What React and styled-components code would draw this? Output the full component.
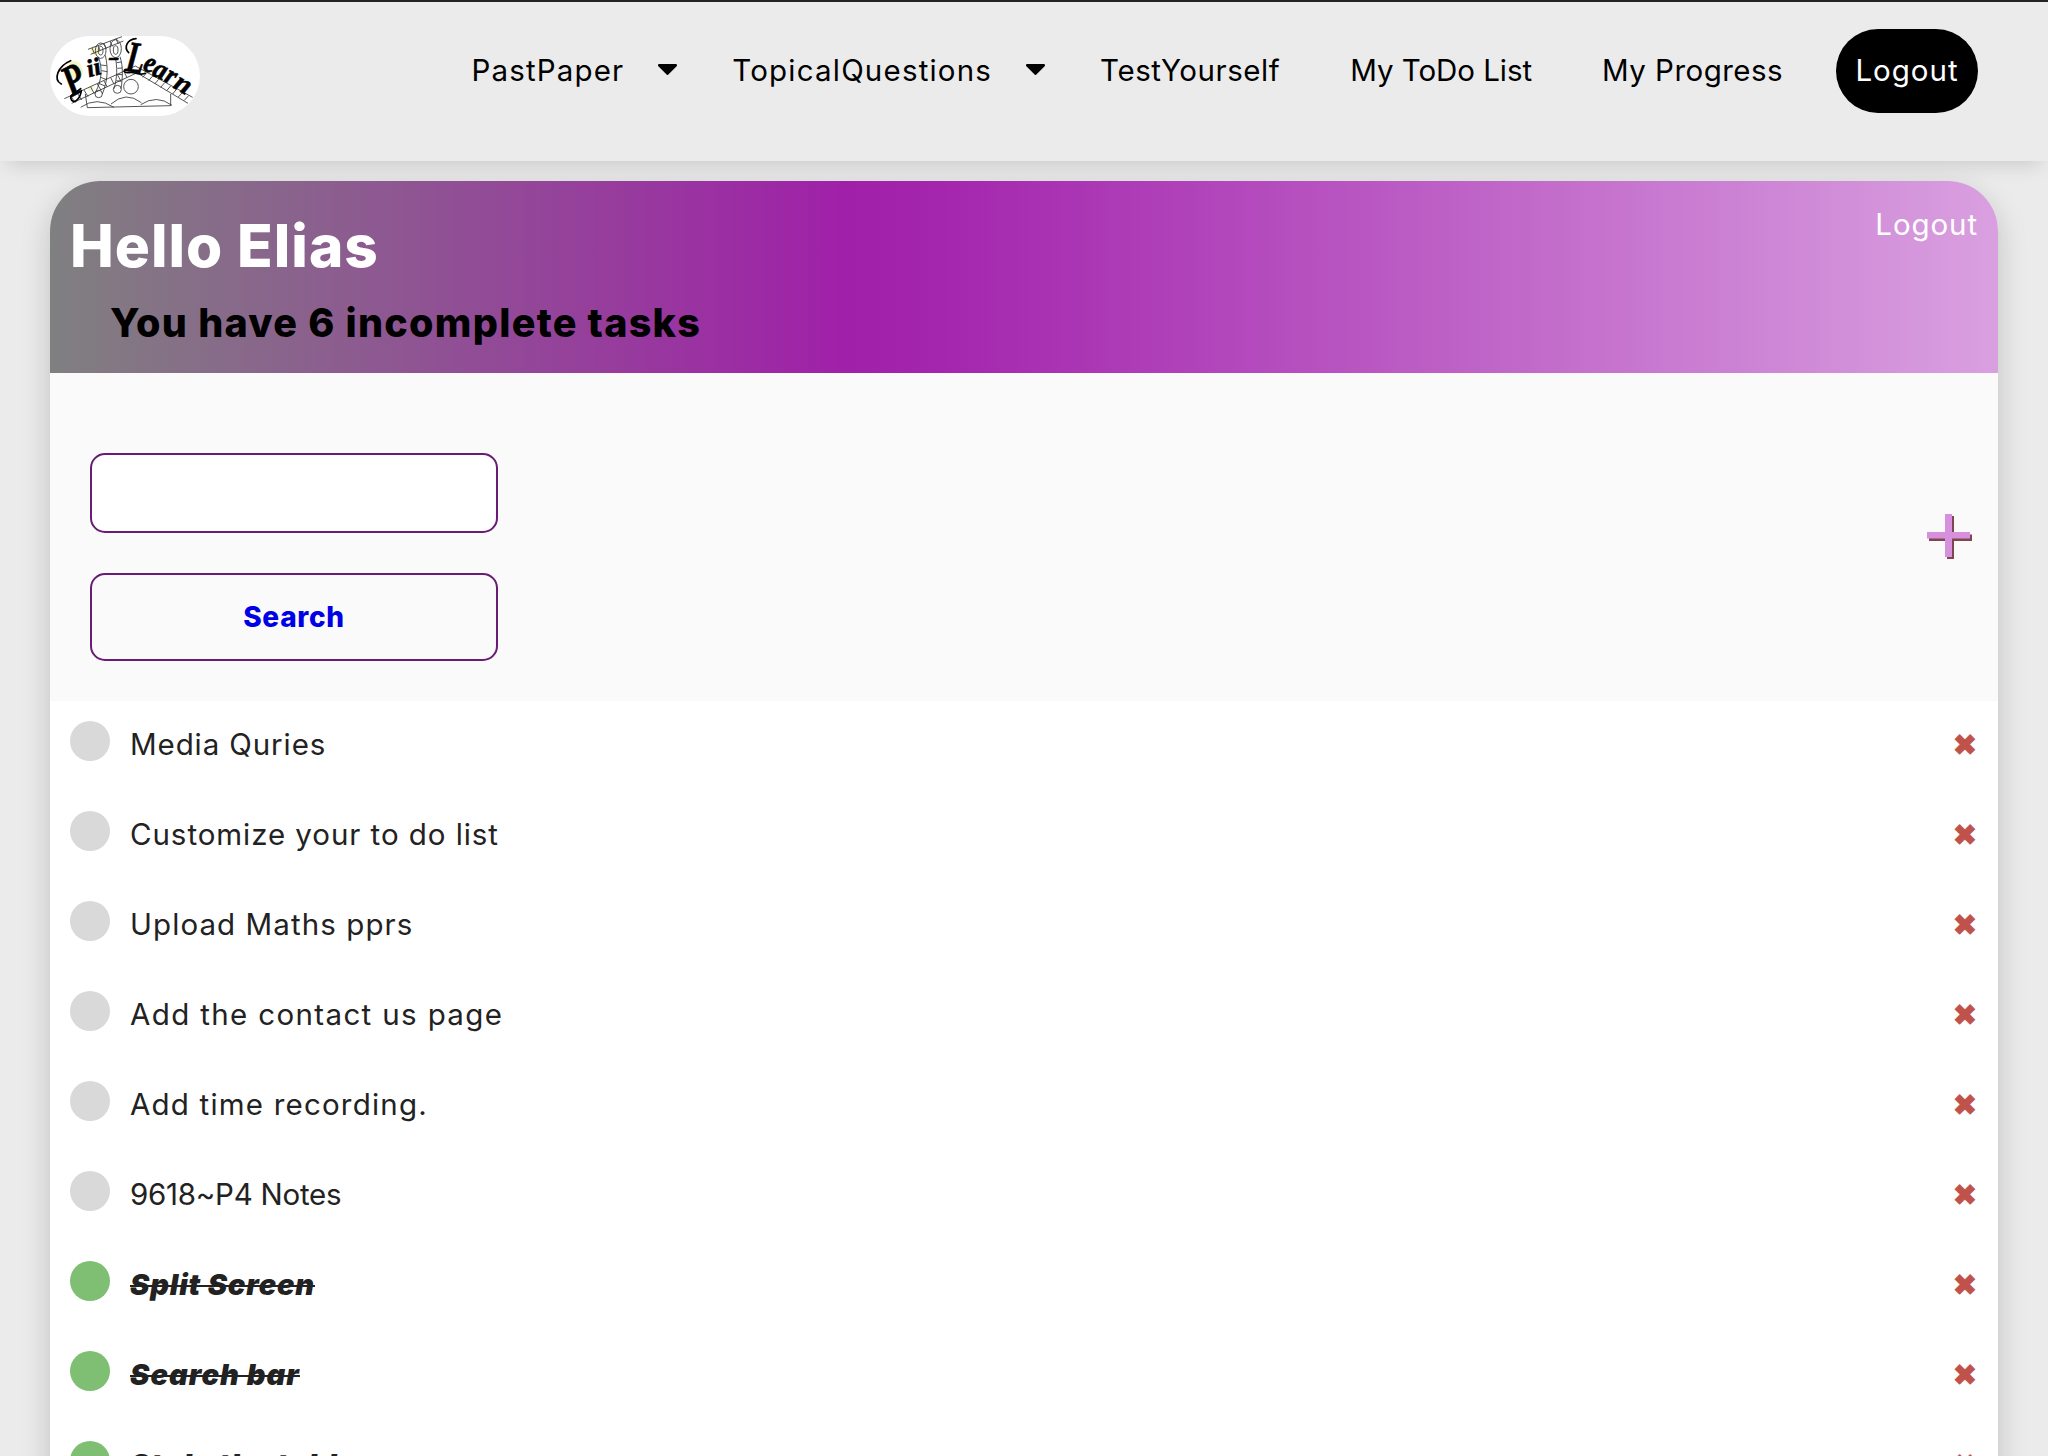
import React from "react";
import styled, { createGlobalStyle } from "styled-components";

const GlobalStyle = createGlobalStyle`
  * { box-sizing: border-box; }
  html, body { margin: 0; padding: 0; }
  body {
    background: #ebebeb;
    font-family: Inter, "Open Sans", sans-serif;
    font-size: 29.5px;
    color: #222;
    overflow: hidden;
  }
`;

const Page = styled.div`
  height: 1456px;
  overflow: hidden;
`;

const Navbar = styled.nav`
  height: 161px;
  padding: 27px 70px 0 50px;
  border-top: 2px solid #272324;
  background: #ebebeb;
  box-shadow: 0 10px 20px -8px rgba(0, 0, 0, 0.16);
  display: flex;
  justify-content: space-between;
  align-items: flex-start;
`;

const LogoBadge = styled.div`
  width: 150px;
  height: 80px;
  margin-top: 7px;
  border-radius: 40px;
  background: #fff;

  svg { display: block; }
`;

const NavLinks = styled.div`
  display: flex;
  align-items: flex-start;
`;

const NavItem = styled.a`
  display: flex;
  align-items: center;
  gap: 34px;
  padding: 0 ${(p) => (p.$menu ? 20 : 35)}px 0 35px;
  line-height: 82px;
  letter-spacing: ${(p) => p.$tracking}px;
  color: #000;
  white-space: nowrap;

  svg { margin-bottom: 1px; }
`;

const LogoutPill = styled.button`
  width: 142px;
  height: 84px;
  margin-left: 18px;
  padding: 0 0 2px;
  border: 0;
  border-radius: 42px;
  background: #000;
  color: #fff;
  font: inherit;
  line-height: 82px;
  letter-spacing: 1px;
`;

const Card = styled.main`
  margin: 20px 50px 0;
  border-radius: 50px 50px 0 0;
  background: #fff;
  box-shadow: 0 10px 30px rgba(0, 0, 0, 0.18);
`;

const CardHeader = styled.header`
  height: 192px;
  padding: 20px 20px 0;
  border-radius: 50px 50px 0 0;
  background: linear-gradient(90deg, #808080, #a020a9 41%, #a324ad 45%, #d9a0e0);
  display: flex;
  justify-content: space-between;
  align-items: flex-start;
`;

const Greeting = styled.h1`
  margin: 0;
  font-size: 58.5px;
  line-height: 90px;
  letter-spacing: 1px;
  font-weight: 800;
  color: #fff;
`;

const Summary = styled.h2`
  margin: 0 0 0 40px;
  font-size: 39.5px;
  line-height: 64px;
  letter-spacing: 1.28px;
  font-weight: 800;
  color: #000;
`;

const HeaderLogout = styled.a`
  line-height: 47px;
  letter-spacing: 0.9px;
  color: #fff;
`;

const Tools = styled.section`
  height: 328px;
  padding: 80px 26px 40px 40px;
  background: #fafafa;
  display: flex;
  justify-content: space-between;
`;

const SearchForm = styled.form`
  width: 408px;
  display: flex;
  flex-direction: column;
  gap: 40px;
`;

const SearchInput = styled.input`
  height: 80px;
  padding: 0 20px;
  border: 2px solid #681c73;
  border-radius: 15px;
  background: #fff;
  font: inherit;
  outline: none;
`;

const SearchButton = styled.button`
  height: 88px;
  padding: 0;
  border: 2px solid #681c73;
  border-radius: 15px;
  background: transparent;
  color: #0000e6;
  font: 800 28px Inter, sans-serif;
  letter-spacing: 0.7px;
`;

const AddLink = styled.a`
  margin-top: 61px;
  height: 45px;

  svg { display: block; }
`;

const TaskRow = styled.div`
  height: 90px;
  padding: 20px 20px 0;
  display: flex;
  align-items: flex-start;
`;

const Dot = styled.span`
  width: 40px;
  height: 40px;
  margin-right: 20px;
  border-radius: 50%;
  background: ${(p) => (p.$done ? "#7ebf74" : "#d9d9d9")};
`;

const TaskTitle = styled.span`
  flex: 1;
  line-height: 47px;

  span {
    display: inline-block;
    letter-spacing: ${(p) => p.$tracking}px;
    font-size: ${(p) => (p.$done ? 29 : 29.5)}px;
    font-weight: ${(p) => (p.$done ? 900 : 400)};
    font-style: ${(p) => (p.$done ? "italic" : "normal")};
    text-decoration: ${(p) => (p.$done ? "line-through 2px" : "none")};
  }
`;

const DeleteMark = styled.span`
  margin-right: 1px;
  font-family: "DejaVu Sans", sans-serif;
  font-size: 29px;
  line-height: 49px;
  color: #c0524c;
  -webkit-text-stroke: 1px #c0524c;
`;

const links = [
  { label: "PastPaper", menu: true, tracking: 1.15 },
  { label: "TopicalQuestions", menu: true, tracking: 1.19 },
  { label: "TestYourself", tracking: 0.55 },
  { label: "My ToDo List", tracking: -0.05 },
  { label: "My Progress", tracking: 0.46 },
];

const tasks = [
  { title: "Media Quries", tracking: 0.9 },
  { title: "Customize your to do list", tracking: 0.94 },
  { title: "Upload Maths pprs", tracking: 1.08 },
  { title: "Add the contact us page", tracking: 1.36 },
  { title: "Add time recording.", tracking: 1.2 },
  { title: "9618~P4 Notes", tracking: -0.25 },
  { title: "Split Screen", done: true, tracking: 0.85 },
  { title: "Search bar", done: true, tracking: 1.07 },
  { title: "Style the table", done: true, tracking: 1.05 },
];

function Caret() {
  return (
    <svg width="19" height="11" viewBox="11.5 192 297 168.5" preserveAspectRatio="none">
      <path d="M31.3 192h257.3c17.8 0 26.7 21.5 14.1 34.1L174.1 354.7c-7.8 7.8-20.5 7.8-28.3 0L17.2 226.1C4.6 213.5 13.5 192 31.3 192z" />
    </svg>
  );
}

function PlusIcon() {
  return (
    <svg width="45" height="45" viewBox="0 0 45 45">
      <path d="M20 2h7v43h-7zM2 20.5h43v6.5H2z" fill="#804650" />
      <path d="M18 0h7v43h-7zM0 18h43v6.5H0z" fill="#d690de" />
    </svg>
  );
}

function Logo() {
  return (
    <svg width="150" height="80" viewBox="60 48 450 240">
      <g fill="#f6f5c4">
        <ellipse cx="137" cy="150" rx="21" ry="28" transform="rotate(-20 137 150)" />
        <circle cx="196" cy="92" r="14" />
        <circle cx="182" cy="206" r="8" />
      </g>
      <g fill="none" stroke="#333" strokeWidth="2.5">
        <path d="M103 236L316 138M125 250L322 158M316 138L488 232M312 153L474 250" />
        <path d="M122 228l14 20M142 219l13 21M162 210l12 20M182 201l11 20M202 192l11 19M222 183l10 18M242 173l10 19M262 164l10 18M282 155l9 18M350 158l-12 14M368 168l-12 14M386 178l-12 14M404 188l-12 14M422 198l-12 14M440 207l-12 15M458 217l-13 14M476 227l-13 14" />
        <path d="M166 222L172 263L422 257V222" />
        <circle cx="303" cy="200" r="22" />
        <path d="M152 262Q200 228 252 262M243 252Q288 212 334 248M332 254Q380 222 426 256" />
        <path d="M174 88L276 50M182 103L280 63M186 84l7 16M204 77l7 16M222 70l7 16M240 63l7 16M258 56l7 16" />
        <ellipse cx="212" cy="92" rx="16" ry="23" />
        <ellipse cx="212" cy="92" rx="7" ry="13" />
        <ellipse cx="257" cy="86" rx="17" ry="27" />
        <ellipse cx="257" cy="90" rx="7" ry="13" />
        <path d="M205 110C218 145 216 178 197 216M226 106C236 150 232 184 217 222M256 112C262 142 262 172 252 206M270 110C280 140 278 176 273 206M212 135l18 2M215 152l17 3M212 172l18 7M206 190l19 8M260 128l14-2M262 145l15-1M262 163l15 1M259 182l16 2" />
        <circle cx="206" cy="222" r="11" />
        <circle cx="262" cy="208" r="12" />
      </g>
      <g fill="none" stroke="#000" strokeWidth="5" strokeLinecap="round">
        <path d="M94 192C68 178 84 138 122 122M154 212C150 240 128 256 122 234C122 220 138 220 152 206M296 98C280 82 292 58 318 56M300 150C280 142 276 160 296 158C316 154 328 168 346 160" />
      </g>
      <g fill="#000" stroke="#000" strokeWidth="2" fontFamily="'Liberation Serif', serif" fontStyle="italic" fontWeight="700">
        <text transform="translate(124 232) rotate(-28)" fontSize="132" textLength="60" lengthAdjust="spacingAndGlyphs">P</text>
        <text transform="translate(177 172) rotate(-16)" fontSize="74" textLength="42" lengthAdjust="spacingAndGlyphs">ii</text>
        <text transform="translate(235 134)" fontSize="70" textLength="34" lengthAdjust="spacingAndGlyphs">-</text>
        <text transform="translate(284 152) rotate(8)" fontSize="132" textLength="54" lengthAdjust="spacingAndGlyphs">L</text>
        <text transform="translate(336 150) rotate(18)" fontSize="88" textLength="34" lengthAdjust="spacingAndGlyphs">e</text>
        <text transform="translate(363 165) rotate(24)" fontSize="84" textLength="40" lengthAdjust="spacingAndGlyphs">a</text>
        <text transform="translate(400 183) rotate(26)" fontSize="82" textLength="30" lengthAdjust="spacingAndGlyphs">r</text>
        <text transform="translate(427 202) rotate(30)" fontSize="82" textLength="48" lengthAdjust="spacingAndGlyphs">n</text>
      </g>
    </svg>
  );
}

export default function App() {
  return (
    <Page>
      <GlobalStyle />
      <Navbar>
        <LogoBadge>
          <Logo />
        </LogoBadge>
        <NavLinks>
          {links.map((l) => (
            <NavItem key={l.label} $menu={l.menu} $tracking={l.tracking}>
              {l.label}
              {l.menu && <Caret />}
            </NavItem>
          ))}
          <LogoutPill>Logout</LogoutPill>
        </NavLinks>
      </Navbar>
      <Card>
        <CardHeader>
          <div>
            <Greeting>Hello Elias</Greeting>
            <Summary>You have 6 incomplete tasks</Summary>
          </div>
          <HeaderLogout>Logout</HeaderLogout>
        </CardHeader>
        <Tools>
          <SearchForm>
            <SearchInput type="text" aria-label="Search tasks" />
            <SearchButton type="button">Search</SearchButton>
          </SearchForm>
          <AddLink>
            <PlusIcon />
          </AddLink>
        </Tools>
        {tasks.map((t) => (
          <TaskRow key={t.title}>
            <Dot $done={t.done} />
            <TaskTitle $done={t.done} $tracking={t.tracking}>
              <span>{t.title}</span>
            </TaskTitle>
            <DeleteMark>✖</DeleteMark>
          </TaskRow>
        ))}
      </Card>
    </Page>
  );
}
